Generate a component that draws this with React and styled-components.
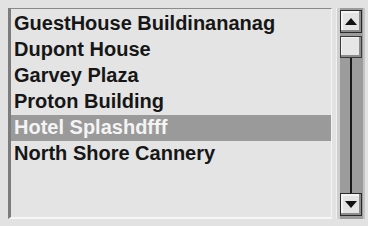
import React, { useState } from 'react';
import styled, { createGlobalStyle } from 'styled-components';

const GlobalStyle = createGlobalStyle`
	html, body {
		margin: 0;
		padding: 0;
		background: #e2e2e2;
		width: 368px;
		height: 226px;
		overflow: hidden;
	}
`;

const Frame = styled.div`
	display: flex;
	align-items: flex-start;
	gap: 4px;
	padding: 8px 0 0 8px;
	font-family: 'Liberation Sans', Arial, sans-serif;
`;

const ListBox = styled.ul`
	box-sizing: border-box;
	width: 324px;
	height: 211px;
	margin: 0;
	padding: 2px 0 0 0;
	list-style: none;
	background: #e4e4e4;
	border-top: 1px solid #8a8a8a;
	border-left: 3px solid #7c7c7c;
	border-right: 1px solid #f4f4f4;
	border-bottom: 2px solid #f6f6f6;
`;

const Row = styled.li`
	height: 26px;
	line-height: 25px;
	padding-left: 3px;
	font-size: 20px;
	font-weight: 700;
	white-space: nowrap;
	color: ${p => (p.$selected ? '#f4f4f4' : '#161616')};
	background: ${p => (p.$selected ? '#9a9a9a' : 'transparent')};
	cursor: default;
`;

const ScrollBar = styled.div`
	box-sizing: border-box;
	width: 29px;
	height: 211px;
	display: flex;
	flex-direction: column;
	align-items: center;
	padding: 2px 0 3px 0;
	background: linear-gradient(to right, #cfcfcf 0 3px, #9c9c9c 3px 26px, #c4c4c4 26px);
	border-left: 1px solid #f0f0f0;
`;

const Track = styled.div`
	flex: 1;
	width: 2px;
	background: #1a1a1a;
`;

const ArrowButton = styled.div`
	box-sizing: border-box;
	width: 22px;
	height: 23px;
	display: flex;
	align-items: center;
	justify-content: center;
	background: #e4e4e4;
	border: 1px solid #2a2a2a;
	box-shadow: inset -2px -2px 0 #8c8c8c, inset 2px 2px 0 #f4f4f4;
`;

const Thumb = styled.div`
	box-sizing: border-box;
	width: 22px;
	height: 22px;
	margin-top: 3px;
	background: #e6e6e6;
	border: 1px solid #3a3a3a;
	box-shadow: inset -2px -2px 0 #8c8c8c, inset 1px 1px 0 #f4f4f4;
`;

const Arrow = styled.span`
	width: 0;
	height: 0;
	border-left: 6px solid transparent;
	border-right: 6px solid transparent;
	${p => (p.$down ? 'border-top: 7px solid #111;' : 'border-bottom: 7px solid #111;')}
`;

const items = [
	'GuestHouse Buildinananag',
	'Dupont House',
	'Garvey Plaza',
	'Proton Building',
	'Hotel Splashdfff',
	'North Shore Cannery'
];

const App = () => {
	const [selected, setSelected] = useState(4);

	return (
		<>
			<GlobalStyle />
			<Frame>
				<ListBox>
					{items.map((name, i) => (
						<Row key={name} $selected={i === selected} onClick={() => setSelected(i)}>
							{name}
						</Row>
					))}
				</ListBox>
				<ScrollBar>
					<ArrowButton>
						<Arrow />
					</ArrowButton>
					<Thumb />
					<Track />
					<ArrowButton>
						<Arrow $down />
					</ArrowButton>
				</ScrollBar>
			</Frame>
		</>
	);
};

export default App;
